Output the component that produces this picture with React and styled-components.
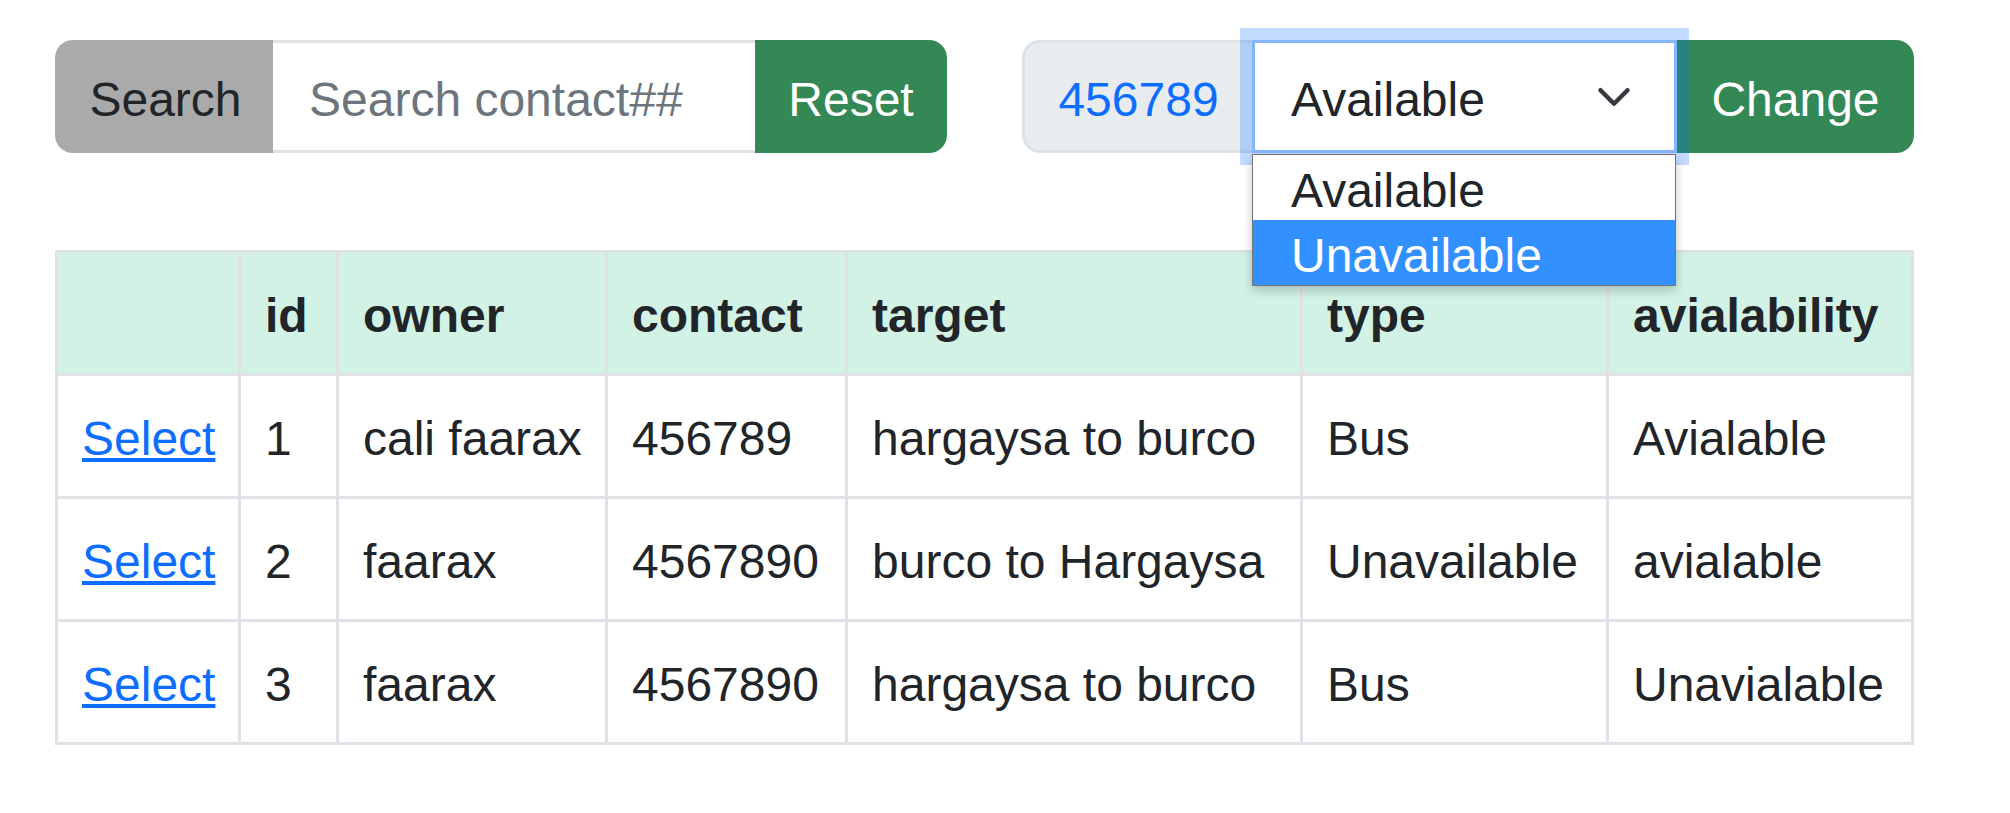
import React from 'react'
import styled, { createGlobalStyle } from 'styled-components'

const rows = [
  { id: 1, owner: 'cali faarax', contact: '456789', target: 'hargaysa to burco', type: 'Bus', availability: 'Avialable' },
  { id: 2, owner: 'faarax', contact: '4567890', target: 'burco to Hargaysa', type: 'Unavailable', availability: 'avialable' },
  { id: 3, owner: 'faarax', contact: '4567890', target: 'hargaysa to burco', type: 'Bus', availability: 'Unavialable' },
]

const columns = [
  { key: 'select', label: '', width: 183 },
  { key: 'id', label: 'id', width: 98 },
  { key: 'owner', label: 'owner', width: 269 },
  { key: 'contact', label: 'contact', width: 240 },
  { key: 'target', label: 'target', width: 455 },
  { key: 'type', label: 'type', width: 306 },
  { key: 'availability', label: 'avialability', width: 305 },
]

const App = () => {
  return (
    <Page>
      <GlobalStyle />
      <Toolbar>
        <InputGroup>
          <Addon $bg="#aaaaaa" $width={218}>Search</Addon>
          <SearchInput placeholder="Search contact##" />
          <GreenButton $width={192}>Reset</GreenButton>
        </InputGroup>

        <InputGroup>
          <Addon $bg="#e9ecef" $color="#0d6efd" $border="#dee2e6" $width={230}>456789</Addon>
          <SelectBox>
            <span>Available</span>
            <Chevron viewBox="0 0 16 16">
              <path d="m2 5 6 6 6-6" fill="none" stroke="#343a40" strokeWidth="2" strokeLinecap="round" strokeLinejoin="round" />
            </Chevron>
            <OptionList>
              <Option>Available</Option>
              <Option $active>Unavailable</Option>
            </OptionList>
          </SelectBox>
          <GreenButton>Change</GreenButton>
        </InputGroup>
      </Toolbar>

      <Table>
        <colgroup>
          {columns.map(c => <Col key={c.key} $width={c.width} />)}
        </colgroup>
        <thead>
          <tr>
            {columns.map(c => <Th key={c.key}>{c.label}</Th>)}
          </tr>
        </thead>
        <tbody>
          {rows.map(r => (
            <tr key={r.id}>
              <Td><SelectLink href="#">Select</SelectLink></Td>
              <Td>{r.id}</Td>
              <Td>{r.owner}</Td>
              <Td>{r.contact}</Td>
              <Td>{r.target}</Td>
              <Td>{r.type}</Td>
              <Td>{r.availability}</Td>
            </tr>
          ))}
        </tbody>
      </Table>
    </Page>
  )
}

const GlobalStyle = createGlobalStyle`
  * { box-sizing: border-box; }
  body {
    margin: 0;
    background: #fff;
    color: #212529;
    font-family: "Liberation Sans", Arial, sans-serif;
  }
`

const Page = styled.div`
  width: 1859px;
  padding: 40px 0 0 0;
  margin-left: 55px;
  font-size: 48px;
`

const Toolbar = styled.div`
  display: grid;
  grid-template-columns: 892px 892px;
  column-gap: 75px;
`

const InputGroup = styled.div`
  display: flex;
  align-items: stretch;
  height: 113px;
  min-width: 0;
`

const Addon = styled.span`
  display: flex;
  align-items: center;
  justify-content: center;
  flex: 0 0 ${p => p.$width}px;
  padding-top: 6px;
  background: ${p => p.$bg};
  color: ${p => p.$color || '#212529'};
  border: 3px solid ${p => p.$border || p.$bg};
  border-right: none;
  border-radius: 18px 0 0 18px;
  font-size: 48px;
  white-space: nowrap;
`

const SearchInput = styled.input`
  flex: 1;
  min-width: 0;
  border: 3px solid #dee2e6;
  border-left: none;
  border-right: none;
  padding: 6px 36px 0;
  font-family: inherit;
  font-size: 48px;
  color: #212529;
  outline: none;

  &::placeholder {
    color: #6c757d;
  }
`

const GreenButton = styled.button`
  flex: ${p => (p.$width ? `0 0 ${p.$width}px` : '1 1 0')};
  min-width: 0;
  background: #338855;
  color: #fff;
  border: none;
  border-radius: 0 18px 18px 0;
  font-family: inherit;
  font-size: 48px;
  padding: 6px 0 0;
  white-space: nowrap;
  cursor: pointer;
`

const SelectBox = styled.div`
  position: relative;
  z-index: 5;
  flex: 0 0 425px;
  display: flex;
  align-items: center;
  padding: 6px 36px 0;
  background: #fff;
  border: 3px solid #86b7fe;
  box-shadow: 0 0 0 12px rgba(13, 110, 253, 0.25);
  color: #212529;
`

const Chevron = styled.svg`
  width: 36px;
  height: 36px;
  margin-left: auto;
  margin-right: 6px;
  margin-top: -6px;
`

const OptionList = styled.div`
  position: absolute;
  top: calc(100% + 4px);
  left: -3px;
  right: -2px;
  background: #fff;
  border: 1px solid #767676;
  box-shadow: 0 4px 10px rgba(0, 0, 0, 0.22);
  z-index: 10;
`

const Option = styled.div`
  height: 65px;
  line-height: 65px;
  padding: 3px 0 0 38px;
  background: ${p => (p.$active ? '#3391ff' : '#fff')};
  color: ${p => (p.$active ? '#fff' : '#212529')};
`

const Table = styled.table`
  margin-top: 97px;
  width: 1856px;
  table-layout: fixed;
  border-collapse: collapse;
  font-size: 48px;
  line-height: 72px;
`

const Col = styled.col`
  width: ${p => p.$width}px;
`

const Th = styled.th`
  background: #d1f2e5;
  border: 3px solid #dee2e6;
  padding: 27px 24px 21px;
  text-align: left;
  font-weight: 700;
  white-space: nowrap;
`

const Td = styled.td`
  border: 3px solid #dee2e6;
  padding: 27px 24px 21px;
  white-space: nowrap;
`

const SelectLink = styled.a`
  color: #0d6efd;
  text-decoration: underline;
`

export default App
